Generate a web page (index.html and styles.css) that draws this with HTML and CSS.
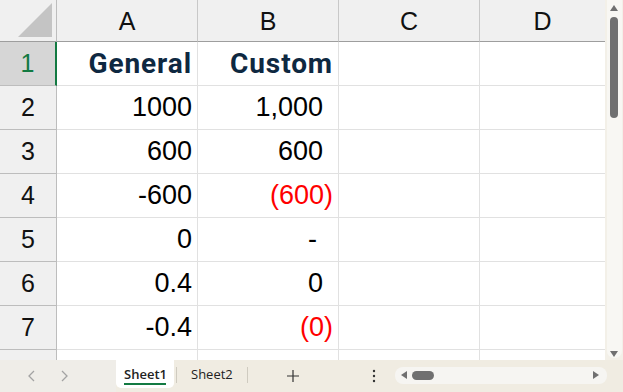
FILE: index.html
```html
<!DOCTYPE html>
<html lang="en">
<head>
<meta charset="UTF-8">
<title>Sheet1</title>
<link rel="stylesheet" href="styles.css">
</head>
<body>
<div class="book">
  <div class="sheet">
    <div class="grid">
      <div class="corner"><span class="corner-tri"></span></div>
      <div class="colhead">A</div>
      <div class="colhead">B</div>
      <div class="colhead">C</div>
      <div class="colhead last">D</div>

      <div class="rowhead sel">1</div>
      <div class="cell title">General</div>
      <div class="cell title">Custom</div>
      <div class="cell"></div>
      <div class="cell last"></div>

      <div class="rowhead">2</div>
      <div class="cell">1000</div>
      <div class="cell pos">1,000</div>
      <div class="cell"></div>
      <div class="cell last"></div>

      <div class="rowhead">3</div>
      <div class="cell">600</div>
      <div class="cell pos">600</div>
      <div class="cell"></div>
      <div class="cell last"></div>

      <div class="rowhead">4</div>
      <div class="cell">-600</div>
      <div class="cell neg">(600)</div>
      <div class="cell"></div>
      <div class="cell last"></div>

      <div class="rowhead">5</div>
      <div class="cell">0</div>
      <div class="cell dash">-</div>
      <div class="cell"></div>
      <div class="cell last"></div>

      <div class="rowhead">6</div>
      <div class="cell">0.4</div>
      <div class="cell pos">0</div>
      <div class="cell"></div>
      <div class="cell last"></div>

      <div class="rowhead">7</div>
      <div class="cell">-0.4</div>
      <div class="cell neg">(0)</div>
      <div class="cell"></div>
      <div class="cell last"></div>

      <div class="rowhead"></div>
      <div class="cell"></div>
      <div class="cell"></div>
      <div class="cell"></div>
      <div class="cell last"></div>
    </div>
    <div class="vscroll">
      <div class="vtrack">
        <span class="arrow up"></span>
        <span class="vthumb"></span>
        <span class="arrow down"></span>
      </div>
    </div>
  </div>

  <div class="tabbar">
    <div class="nav">
      <svg width="10" height="14" viewBox="0 0 10 14"><path d="M7 2 L2 7 L7 12" fill="none" stroke="#a3a3a3" stroke-width="1.3"/></svg>
      <svg width="10" height="14" viewBox="0 0 10 14"><path d="M3 2 L8 7 L3 12" fill="none" stroke="#a3a3a3" stroke-width="1.3"/></svg>
    </div>
    <div class="tab active">Sheet1</div>
    <span class="tab-sep"></span>
    <div class="tab">Sheet2</div>
    <span class="tab-sep"></span>
    <div class="add">
      <svg width="14" height="14" viewBox="0 0 14 14"><path d="M7 1 V13 M1 7 H13" stroke="#333" stroke-width="1.2"/></svg>
    </div>
    <div class="more">
      <svg width="4" height="14" viewBox="0 0 4 14"><circle cx="2" cy="2" r="1.2" fill="#333"/><circle cx="2" cy="7" r="1.2" fill="#333"/><circle cx="2" cy="12" r="1.2" fill="#333"/></svg>
    </div>
    <div class="hscroll">
      <span class="arrow left"></span>
      <span class="hthumb"></span>
      <span class="arrow right"></span>
    </div>
  </div>
</div>
</body>
</html>
```

FILE: styles.css
```css
body {
    margin: 0;
    background: #f0ece2;
    font-family: "Liberation Sans", Arial, sans-serif;
}
.book {
    width: 623px;
    height: 392px;
    overflow: hidden;
}
.sheet {
    display: flex;
    height: 360px;
}
.grid {
    width: 605px;
    height: 360px;
    overflow: hidden;
    display: grid;
    grid-template-columns: 57px 141px 141px 141px 125px;
    grid-template-rows: 42px;
    grid-auto-rows: 44px;
    background: #fff;
}
.grid > div {
    box-sizing: border-box;
    border-right: 1px solid #e1e1e1;
    border-bottom: 1px solid #e1e1e1;
    display: flex;
    align-items: center;
}
.corner {
    background: #f0f0f0;
    position: relative;
    border-right: 1px solid #bdbdbd !important;
    border-bottom: 1px solid #9e9e9e !important;
}
.corner-tri {
    position: absolute;
    right: 4px;
    bottom: 4px;
    width: 0;
    height: 0;
    border-left: 34px solid transparent;
    border-bottom: 34px solid #c4c4c4;
}
.colhead {
    background: #f0f0f0;
    justify-content: center;
    font-size: 25px;
    color: #111;
    border-right: 1px solid #c8c8c8 !important;
    border-bottom: 1px solid #9e9e9e !important;
    padding-top: 2px;
}
.colhead.last {
    border-right: none !important;
}
.rowhead {
    background: #f0f0f0;
    justify-content: center;
    font-size: 25px;
    color: #111;
    border-right: 1px solid #bdbdbd !important;
    border-bottom: 1px solid #bdbdbd !important;
}
.rowhead.sel {
    background: #d6d6d6;
    color: #137a42;
    border-right: 2px solid #137a42 !important;
}
.cell {
    justify-content: flex-end;
    padding-right: 5px;
    font-size: 27px;
    color: #000;
}
.cell.last {
    border-right: none;
}
.cell.title {
    font-family: "Roboto", "Liberation Sans", sans-serif;
    font-weight: bold;
    font-size: 28px;
    letter-spacing: 0.9px;
    color: #0e2841;
}
.cell.pos {
    padding-right: 15px;
}
.cell.dash {
    padding-right: 21px;
}
.cell.neg {
    color: #ff0000;
}
.vscroll {
    width: 18px;
    background: #f3f0e8;
    padding: 0 1px 0 2px;
    box-sizing: border-box;
}
.vtrack {
    height: 358px;
    background: #f8f7f3;
    border-radius: 0 0 7px 7px;
    position: relative;
}
.vthumb {
    position: absolute;
    left: 3px;
    top: 17px;
    width: 8px;
    height: 101px;
    border-radius: 4px;
    background: #707070;
}
.arrow {
    position: absolute;
    width: 0;
    height: 0;
}
.arrow.up {
    left: 3px;
    top: 5px;
    border-left: 4px solid transparent;
    border-right: 4px solid transparent;
    border-bottom: 6px solid #707070;
}
.arrow.down {
    left: 3px;
    top: 351px;
    border-left: 4px solid transparent;
    border-right: 4px solid transparent;
    border-top: 6px solid #707070;
}
.tabbar {
    height: 32px;
    display: flex;
    align-items: flex-start;
    font-family: "Open Sans", "Liberation Sans", sans-serif;
    font-size: 13px;
    color: #222;
}
.nav {
    width: 116px;
    height: 32px;
    display: flex;
    align-items: center;
    gap: 22px;
    padding-left: 27px;
    box-sizing: border-box;
    background: #efede8;
}
.tab {
    height: 28px;
    display: flex;
    align-items: center;
    padding: 0 12px 0 14px;
}
.tab.active {
    background: #fff;
    font-weight: 600;
    width: 58px;
    box-sizing: border-box;
    padding: 0 8px;
    border-radius: 0 0 5px 5px;
    position: relative;
}
.tab.active::after {
    content: "";
    position: absolute;
    left: 8px;
    right: 8px;
    bottom: 3px;
    height: 2px;
    background: #137a42;
}
.tab-sep {
    width: 1px;
    height: 16px;
    margin-top: 7px;
    margin-left: 2px;
    background: #cfcbc0;
}
.add {
    width: 90px;
    height: 32px;
    display: flex;
    align-items: center;
    justify-content: center;
}
.more {
    width: 57px;
    height: 32px;
    box-sizing: border-box;
    padding-left: 34px;
    display: flex;
    align-items: center;
}
.hscroll {
    margin-top: 7px;
    width: 212px;
    height: 17px;
    border-radius: 8px;
    background: #f6f5f2;
    position: relative;
}
.hthumb {
    position: absolute;
    left: 17px;
    top: 4px;
    width: 22px;
    height: 9px;
    border-radius: 5px;
    background: #707070;
}
.arrow.left {
    left: 6px;
    top: 4px;
    border-top: 4px solid transparent;
    border-bottom: 4px solid transparent;
    border-right: 6px solid #707070;
}
.arrow.right {
    right: 8px;
    top: 4px;
    border-top: 4px solid transparent;
    border-bottom: 4px solid transparent;
    border-left: 6px solid #707070;
}
```
